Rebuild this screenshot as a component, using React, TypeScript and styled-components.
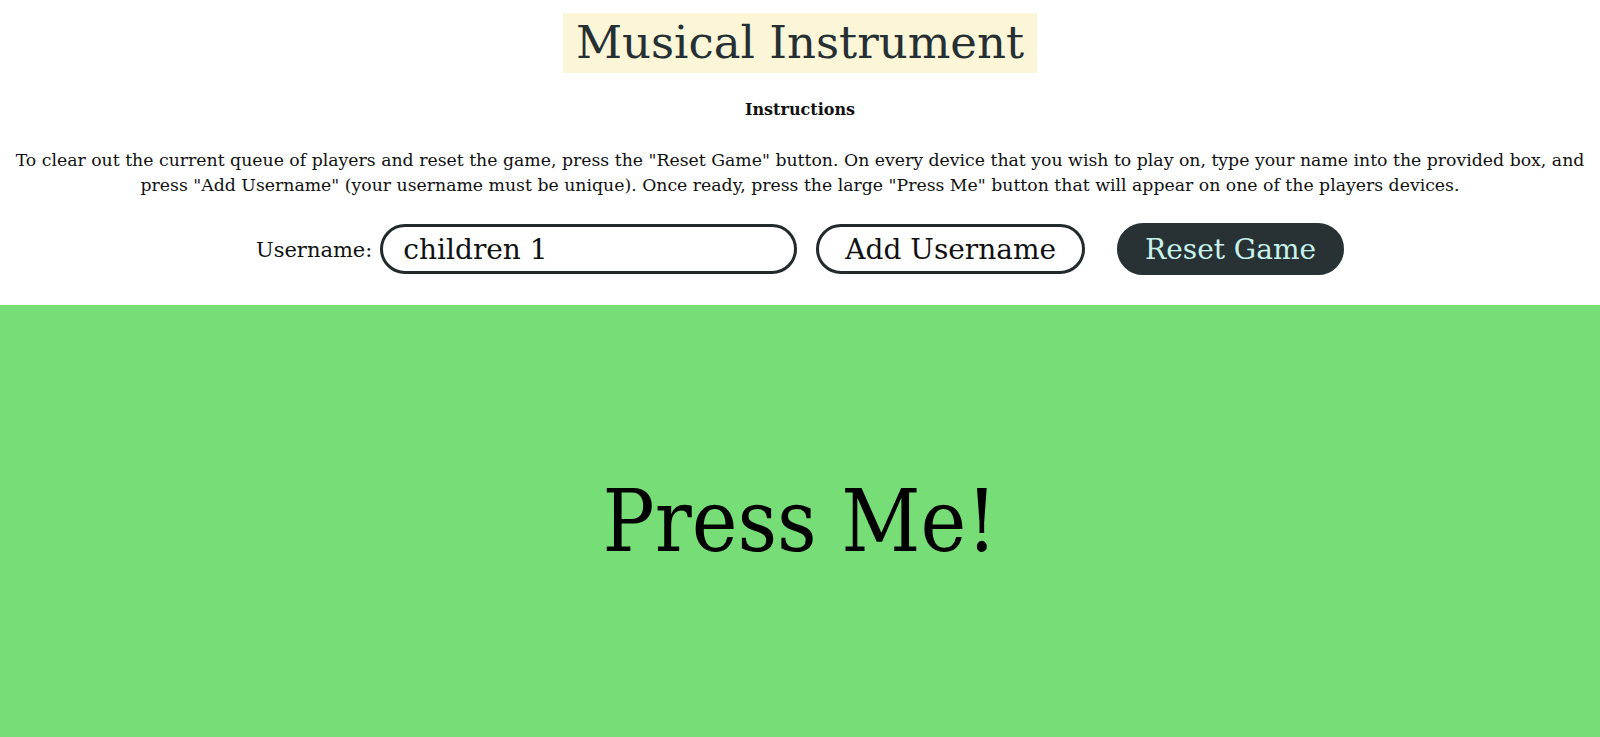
import React, { useState } from "react";
import styled, { createGlobalStyle } from "styled-components";

const Global = createGlobalStyle`
  html, body { margin: 0; padding: 0; background: #ffffff; }
  body { font-family: "DejaVu Serif", serif; color: #111; }
  #root { min-height: 100vh; display: flex; flex-direction: column; }
`;

const Page = styled.div`
  display: flex;
  flex-direction: column;
  min-height: 100vh;
`;

const Header = styled.header`
  display: flex;
  flex-direction: column;
  align-items: center;
  padding: 13px 8px 30px;
`;

const Title = styled.h1`
  margin: 0;
  height: 60px;
  line-height: 60px;
  padding: 0 13px;
  background: #fbf6d8;
  color: #263033;
  font-weight: 400;
  font-size: 45px;
`;

const Subtitle = styled.h4`
  margin: 26px 0 0;
  font-size: 16px;
  line-height: 22px;
  font-weight: 700;
`;

const Instructions = styled.p`
  margin: 27px 0 0;
  font-size: 17.3px;
  line-height: 25px;
  text-align: center;
`;

const Row = styled.div`
  display: flex;
  align-items: center;
  margin-top: 25px;
  height: 52px;
`;

const Label = styled.label`
  font-size: 21px;
  margin-right: 8px;
  padding-top: 2px;
`;

const Input = styled.input`
  box-sizing: border-box;
  width: 417px;
  height: 50px;
  border: 3px solid #222a2c;
  border-radius: 25px;
  padding: 0 20px;
  font-family: inherit;
  font-size: 28px;
  color: #111;
  outline: none;
`;

const Button = styled.button<{ $dark?: boolean }>`
  box-sizing: border-box;
  height: ${(p) => (p.$dark ? "52px" : "50px")};
  padding: 0 ${(p) => (p.$dark ? "25px" : "26px")};
  border-radius: 26px;
  border: 3px solid ${(p) => (p.$dark ? "#283235" : "#222a2c")};
  background: ${(p) => (p.$dark ? "#283235" : "#ffffff")};
  color: ${(p) => (p.$dark ? "#c8f3ec" : "#111")};
  font-family: inherit;
  font-size: 28px;
  margin-left: ${(p) => (p.$dark ? "32px" : "19px")};
  cursor: pointer;
`;

const PressArea = styled.button`
  flex: 1;
  border: none;
  margin: 0;
  background: #77dd77;
  display: flex;
  align-items: center;
  justify-content: center;
  font-family: "DejaVu Serif Condensed", "DejaVu Serif", serif;
  font-size: 86px;
  color: #000;
  cursor: pointer;
`;

export default function App() {
  const [name, setName] = useState("children 1");
  return (
    <Page>
      <Global />
      <Header>
        <Title>Musical Instrument</Title>
        <Subtitle>Instructions</Subtitle>
        <Instructions>
          To clear out the current queue of players and reset the game, press the "Reset Game" button. On every
          device that you wish to play on, type your name into the provided box, and press "Add Username" (your
          username must be unique). Once ready, press the large "Press Me" button that will appear on one of the
          players devices.
        </Instructions>
        <Row>
          <Label htmlFor="username">Username:</Label>
          <Input id="username" value={name} onChange={(e) => setName(e.target.value)} />
          <Button>Add Username</Button>
          <Button $dark>Reset Game</Button>
        </Row>
      </Header>
      <PressArea>Press Me!</PressArea>
    </Page>
  );
}
